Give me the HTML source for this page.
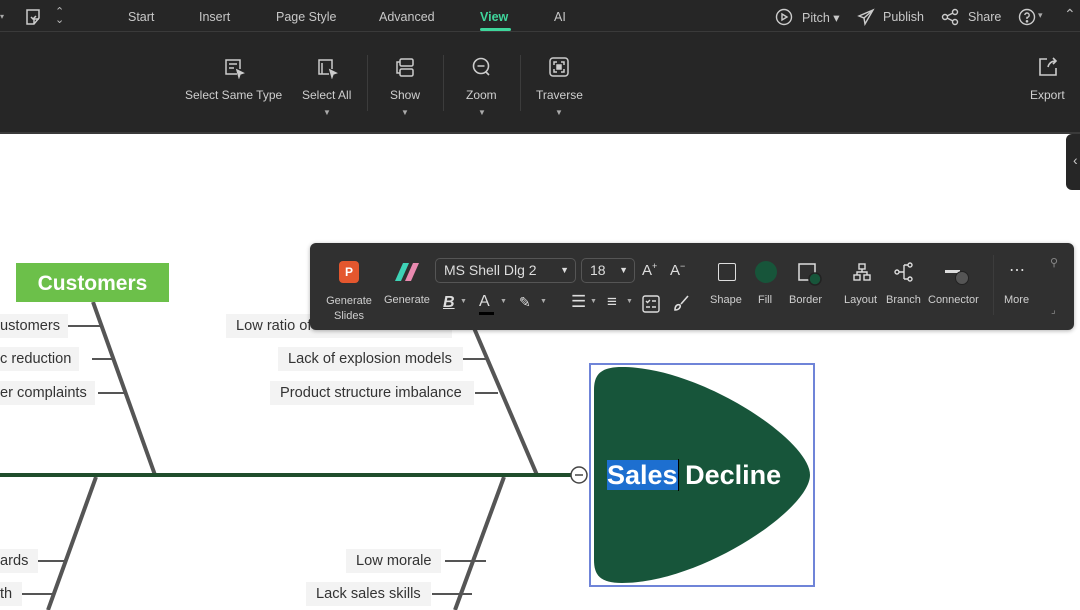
<!DOCTYPE html>
<html><head><meta charset="utf-8"><style>
*{margin:0;padding:0;box-sizing:border-box}
body{width:1080px;height:610px;overflow:hidden;background:#fff;font-family:"Liberation Sans",sans-serif;position:relative}
.a{position:absolute}
.top{left:0;top:0;width:1080px;height:134px;background:#262626;border-bottom:2px solid #3a3a3a}
.tab{top:10px;font-size:12.5px;color:#c8c8c8}
.rb{font-size:12px;color:#cfcfcf;text-align:center}
.lbl{background:#f3f3f3;color:#333;font-size:14.6px;height:24px;line-height:24px;padding:0 10px;white-space:nowrap;overflow:hidden}
.ft{font-size:11px;color:#cfcfcf}
.sep{width:1px;background:#3c3c3c}
</style></head><body>
<div class="a top"></div>
<div class="a" style="left:0;top:31px;width:1080px;height:1px;background:#3a3a3a"></div>
<div class="a" style="left:0;top:12px;width:4px;height:8px;color:#aaa;font-size:8px">▾</div>
<svg class="a" style="left:24px;top:8px" width="18" height="18" viewBox="0 0 18 18" fill="none" stroke="#ccc" stroke-width="1.5"><path d="M3 2h12v8l-5 6H3z"/><path d="M10 16v-5h5" /><path d="M7 9l2 2 3-3"/></svg>
<div class="a" style="left:55px;top:8px;color:#bbb;font-size:11px;line-height:8px">⌃<br>⌄</div>
<div class="a tab" style="left:128px">Start</div>
<div class="a tab" style="left:199px">Insert</div>
<div class="a tab" style="left:276px">Page Style</div>
<div class="a tab" style="left:379px">Advanced</div>
<div class="a tab" style="left:480px;color:#3fd69c;font-weight:bold">View</div>
<div class="a" style="left:480px;top:28px;width:31px;height:3px;border-radius:2px;background:#3fd69c"></div>
<div class="a tab" style="left:554px">AI</div>
<svg class="a" style="left:775px;top:8px" width="18" height="18" viewBox="0 0 18 18" fill="none" stroke="#ccc" stroke-width="1.4"><circle cx="9" cy="9" r="7.5"/><path d="M7 6l5 3-5 3z"/></svg>
<div class="a tab" style="left:802px">Pitch ▾</div>
<svg class="a" style="left:857px;top:8px" width="18" height="18" viewBox="0 0 18 18" fill="none" stroke="#ccc" stroke-width="1.4"><path d="M16 2L2 8l5 2 1 6z"/><path d="M7 10l9-8"/></svg>
<div class="a tab" style="left:883px">Publish</div>
<svg class="a" style="left:941px;top:8px" width="18" height="18" viewBox="0 0 18 18" fill="none" stroke="#ccc" stroke-width="1.4"><circle cx="4" cy="9" r="2.5"/><circle cx="14" cy="4" r="2.5"/><circle cx="14" cy="14" r="2.5"/><path d="M6 8l6-3M6 10l6 3"/></svg>
<div class="a tab" style="left:968px">Share</div>
<svg class="a" style="left:1018px;top:8px" width="18" height="18" viewBox="0 0 18 18" fill="none" stroke="#ccc" stroke-width="1.4"><circle cx="9" cy="9" r="7.5"/><path d="M6.8 7a2.2 2.2 0 1 1 2.2 2.4V11"/><circle cx="9" cy="13.3" r=".6" fill="#ccc"/></svg>
<div class="a" style="left:1038px;top:10px;color:#aaa;font-size:9px">▾</div>
<div class="a" style="left:1064px;top:6px;color:#bbb;font-size:14px">⌃</div>
<svg class="a" style="left:223px;top:57px" width="22" height="22" viewBox="0 0 22 22" fill="none" stroke="#ccc" stroke-width="1.5"><path d="M14 17H3V3h14v9"/><path d="M6 7h8M6 11h5"/><path d="M14 13l6 3-3 1-1 3z" fill="#ccc"/></svg>
<div class="a rb" style="left:185px;top:88px">Select Same Type</div>
<svg class="a" style="left:316px;top:57px" width="22" height="22" viewBox="0 0 22 22" fill="none" stroke="#ccc" stroke-width="1.5"><path d="M13 17H3V3h13v9"/><path d="M6 6v11"/><path d="M14 13l6 3-3 1-1 3z" fill="#ccc"/></svg>
<div class="a rb" style="left:302px;top:88px">Select All</div>
<div class="a" style="left:323px;top:108px;color:#aaa;font-size:8px">▼</div>
<div class="a sep" style="left:367px;top:55px;height:56px"></div>
<svg class="a" style="left:394px;top:57px" width="22" height="22" viewBox="0 0 22 22" fill="none" stroke="#ccc" stroke-width="1.5"><rect x="6" y="2" width="13" height="7" rx="1.5"/><rect x="6" y="12" width="13" height="7" rx="1.5"/><path d="M6 5H3v11h3"/></svg>
<div class="a rb" style="left:390px;top:88px">Show</div>
<div class="a" style="left:401px;top:108px;color:#aaa;font-size:8px">▼</div>
<div class="a sep" style="left:443px;top:55px;height:56px"></div>
<svg class="a" style="left:470px;top:56px" width="22" height="22" viewBox="0 0 22 22" fill="none" stroke="#ccc" stroke-width="1.6"><circle cx="11" cy="10" r="7.5"/><path d="M7.5 10h7M16 16l3 3"/></svg>
<div class="a rb" style="left:466px;top:88px">Zoom</div>
<div class="a" style="left:478px;top:108px;color:#aaa;font-size:8px">▼</div>
<div class="a sep" style="left:520px;top:55px;height:56px"></div>
<svg class="a" style="left:548px;top:56px" width="22" height="22" viewBox="0 0 22 22" fill="none" stroke="#ccc" stroke-width="1.5"><rect x="2" y="2" width="18" height="18" rx="3"/><path d="M6 9V6h3M13 6h3v3M16 13v3h-3M9 16H6v-3"/><rect x="9" y="9" width="4" height="4" fill="#ccc"/></svg>
<div class="a rb" style="left:536px;top:88px">Traverse</div>
<div class="a" style="left:555px;top:108px;color:#aaa;font-size:8px">▼</div>
<svg class="a" style="left:1037px;top:56px" width="22" height="22" viewBox="0 0 22 22" fill="none" stroke="#ccc" stroke-width="1.6"><path d="M10 3H3v16h16v-7"/><path d="M11 11c1-4 4-6 8-6M16 2l3 3-3 3"/></svg>
<div class="a rb" style="left:1030px;top:88px">Export</div>
<div class="a" style="left:1066px;top:134px;width:20px;height:56px;background:#262626;border-radius:6px 0 0 6px"></div>
<div class="a" style="left:1073px;top:152px;color:#ccc;font-size:14px">‹</div>

<svg class="a" style="left:0;top:0" width="1080" height="610">
<g stroke="#555" stroke-width="4" fill="none">
<path d="M93 302L155 475"/><path d="M462 300L537 475"/>
<path d="M96 477L48 610"/><path d="M504 477L455 610"/>
</g>
<g stroke="#555" stroke-width="2">
<path d="M60 326H101M92 359H113M98 393H125M452 326H475M463 359H487M475 393H498M445 561H486M432 594H472M28 561H64M16 594H54"/>
</g>
<path d="M0 475H571" stroke="#1f4d2c" stroke-width="4"/>
<circle cx="579" cy="475" r="8" fill="#fff" stroke="#444" stroke-width="1.5"/><path d="M575 475h8" stroke="#444" stroke-width="1.5"/>
<rect x="590" y="364" width="224" height="222" fill="none" stroke="#6f84d8" stroke-width="2"/>
<path d="M622 367C700 367 810 440 810 475C810 510 700 583 622 583C600 583 594 575 594 560V390C594 375 600 367 622 367Z" fill="#17553a"/>
</svg>
<div class="a" style="left:16px;top:263px;width:153px;height:39px;background:#6cc04a;color:#fff;font-weight:bold;font-size:21px;text-align:center;line-height:42px">Customers</div>
<div class="a lbl" style="left:0;top:314px;padding-left:0;padding-right:8px">ustomers</div>
<div class="a lbl" style="left:0;top:347px;padding-left:0;padding-right:8px">c reduction</div>
<div class="a lbl" style="left:0;top:381px;padding-left:0;padding-right:8px">er complaints</div>
<div class="a lbl" style="left:226px;top:314px;width:226px">Low ratio of</div>
<div class="a lbl" style="left:278px;top:347px;width:185px">Lack of explosion models</div>
<div class="a lbl" style="left:270px;top:381px;width:204px">Product structure imbalance</div>
<div class="a lbl" style="left:0;top:549px;padding-left:0">ards</div>
<div class="a lbl" style="left:0;top:582px;padding-left:0">th</div>
<div class="a lbl" style="left:346px;top:549px">Low morale</div>
<div class="a lbl" style="left:306px;top:582px">Lack sales skills</div>
<div class="a" style="left:607px;top:458px;font-size:27px;font-weight:bold;color:#fff;white-space:nowrap;line-height:34px"><span style="background:#1d6fd0">Sales</span>&nbsp;Decline</div>
<div class="a" style="left:678px;top:459px;width:1px;height:32px;background:#000"></div>

<div class="a" style="left:310px;top:243px;width:764px;height:87px;background:#303030;border-radius:6px;box-shadow:0 1px 4px rgba(0,0,0,.3)"></div>
<div class="a" style="left:339px;top:261px;width:20px;height:22px;background:#e4572e;border-radius:4px;color:#fff;font-size:12px;font-weight:bold;text-align:center;line-height:22px">P</div>
<svg class="a" style="left:393px;top:261px" width="28" height="22"><path d="M2 20L10 2h6L8 20z" fill="#3ed3b6"/><path d="M12 20L20 2h6l-8 18z" fill="#e98ab0"/></svg>
<div class="a ft" style="left:326px;top:294px;text-align:center;width:46px;line-height:15px">Generate<br>Slides</div>
<div class="a ft" style="left:384px;top:294px">Generate</div>
<div class="a" style="left:435px;top:258px;width:141px;height:25px;border:1px solid #555;border-radius:5px;color:#ddd;font-size:14px;line-height:23px;padding-left:8px">MS Shell Dlg 2<span style="position:absolute;right:6px;font-size:9px">▼</span></div>
<div class="a" style="left:581px;top:258px;width:54px;height:25px;border:1px solid #555;border-radius:5px;color:#ddd;font-size:14px;line-height:23px;padding-left:8px">18<span style="position:absolute;right:6px;font-size:9px">▼</span></div>
<div class="a" style="left:642px;top:261px;color:#ddd;font-size:15px">A<sup style="font-size:9px">+</sup></div>
<div class="a" style="left:670px;top:261px;color:#ddd;font-size:15px">A<sup style="font-size:9px">−</sup></div>
<div class="a" style="left:443px;top:294px;color:#ddd;font-size:16px;font-style:italic;font-weight:bold;text-decoration:underline">B</div><div class="a" style="left:460px;top:298px;color:#aaa;font-size:7px">▼</div>
<div class="a" style="left:479px;top:293px;color:#ddd;font-size:16px">A</div><div class="a" style="left:479px;top:312px;width:15px;height:3px;background:#000"></div><div class="a" style="left:500px;top:298px;color:#aaa;font-size:7px">▼</div>
<div class="a" style="left:519px;top:294px;color:#ddd;font-size:14px">✎</div><div class="a" style="left:540px;top:298px;color:#aaa;font-size:7px">▼</div>
<div class="a" style="left:571px;top:292px;color:#ddd;font-size:17px">☰</div><div class="a" style="left:590px;top:298px;color:#aaa;font-size:7px">▼</div>
<div class="a" style="left:607px;top:292px;color:#ddd;font-size:17px">≡</div><div class="a" style="left:626px;top:298px;color:#aaa;font-size:7px">▼</div>
<svg class="a" style="left:642px;top:295px" width="18" height="18" fill="none" stroke="#ddd" stroke-width="1.4"><rect x="1" y="1" width="16" height="16" rx="2"/><path d="M4 6l1.5 1.5L8 5M10 6h4M4 12h4M10 12h4"/></svg>
<svg class="a" style="left:672px;top:294px" width="18" height="18" fill="none" stroke="#ddd" stroke-width="1.6"><path d="M16 2l-7 8M3 16c0-4 2-6 5-5 1 2-1 5-5 5z"/></svg>
<div class="a" style="left:718px;top:263px;width:18px;height:18px;border:1.5px solid #ddd;border-radius:2px"></div>
<div class="a ft" style="left:710px;top:294px">Shape</div>
<div class="a" style="left:755px;top:261px;width:22px;height:22px;border-radius:50%;background:#17553a"></div>
<div class="a ft" style="left:758px;top:294px">Fill</div>
<svg class="a" style="left:796px;top:261px" width="28" height="28" fill="none" stroke="#ddd" stroke-width="1.5"><rect x="3" y="3" width="16" height="16"/><circle cx="19" cy="18" r="6" fill="#17553a" stroke="#222"/></svg>
<div class="a ft" style="left:789px;top:294px">Border</div>
<svg class="a" style="left:852px;top:262px" width="20" height="20" fill="none" stroke="#ddd" stroke-width="1.4"><rect x="7" y="2" width="6" height="5"/><rect x="2" y="13" width="6" height="5"/><rect x="12" y="13" width="6" height="5"/><path d="M10 7v3M5 13v-3h10v3"/></svg>
<div class="a ft" style="left:844px;top:294px">Layout</div>
<svg class="a" style="left:893px;top:261px" width="22" height="22" fill="none" stroke="#ddd" stroke-width="1.4"><circle cx="4" cy="11" r="2"/><circle cx="17" cy="4" r="2"/><circle cx="17" cy="18" r="2"/><path d="M6 11h5M11 4v14M11 4h4M11 18h4"/></svg>
<div class="a ft" style="left:886px;top:294px">Branch</div>
<div class="a" style="left:945px;top:270px;width:15px;height:3px;background:#ddd"></div>
<div class="a" style="left:955px;top:271px;width:14px;height:14px;border-radius:50%;background:#555;border:1.5px solid #222"></div>
<div class="a ft" style="left:928px;top:294px">Connector</div>
<div class="a sep" style="left:993px;top:255px;height:60px"></div>
<div class="a" style="left:1009px;top:260px;color:#ddd;font-size:16px">⋯</div>
<div class="a ft" style="left:1004px;top:294px">More</div>
<div class="a" style="left:1050px;top:256px;color:#888;font-size:11px">⚲</div>
<div class="a" style="left:1051px;top:305px;color:#888;font-size:10px">⌟</div>
</body></html>
